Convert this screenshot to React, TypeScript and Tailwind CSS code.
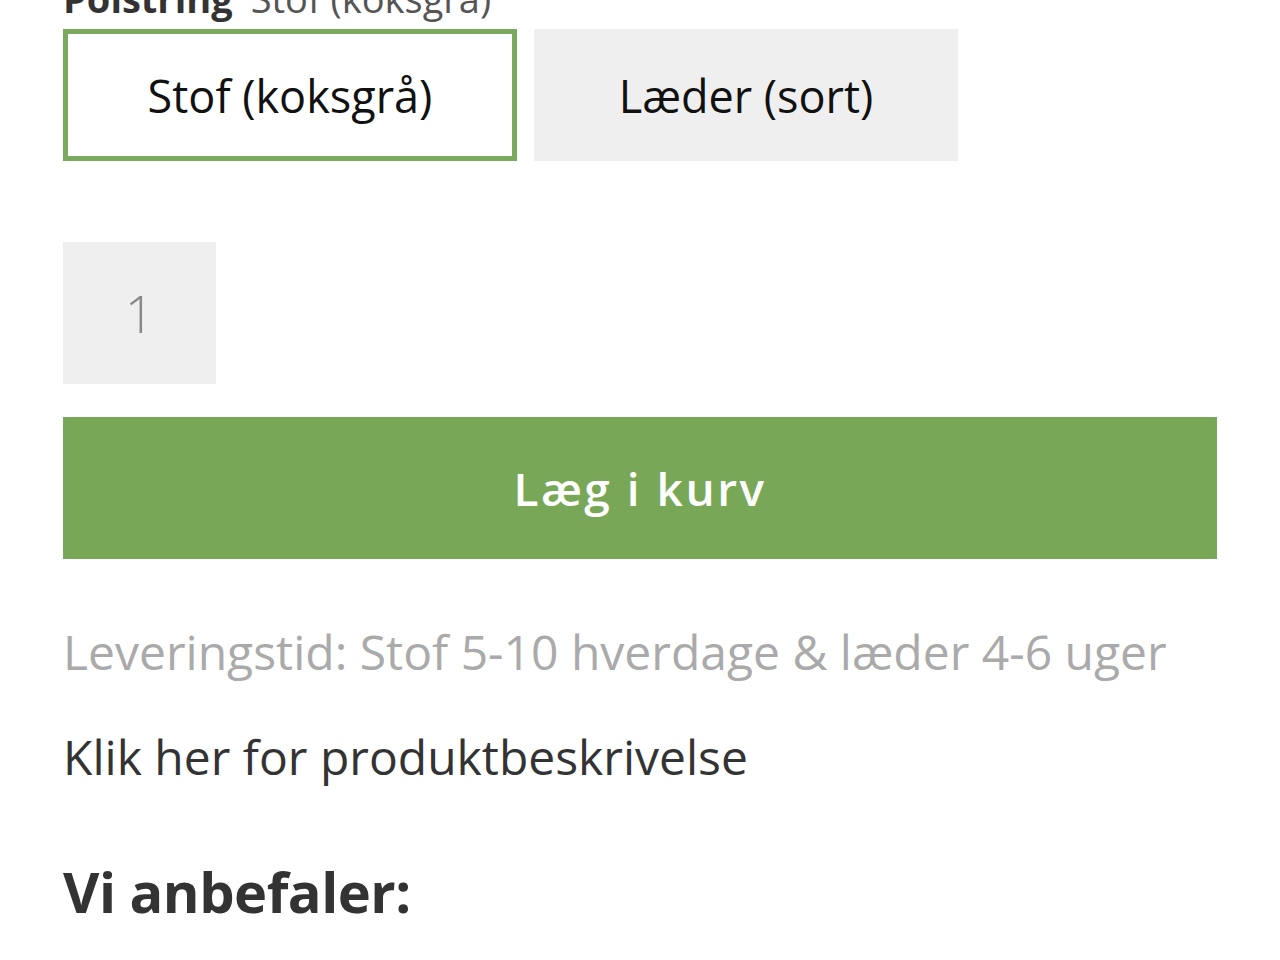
import React from "react";

export default function App() {
  return (
    <div className="min-h-[960px] bg-white overflow-hidden px-[63px] font-['Open_Sans',sans-serif]">
      <div className="-mt-[21px] h-[38px] text-[38px] leading-[38px] whitespace-nowrap">
        <span className="font-bold text-[#333333]">Polstring</span>
        <span className="ml-[18px] text-[#555555]">Stof (koksgrå)</span>
      </div>
      <div className="mt-[12px] flex gap-[17px]">
        <button className="flex h-[132px] w-[454px] items-center justify-center border-[5px] border-[#7aaa5d] bg-white text-[45px] leading-none text-[#111111]">
          Stof (koksgrå)
        </button>
        <button className="flex h-[132px] w-[424px] items-center justify-center bg-[#efefef] text-[45px] leading-none text-[#111111]">
          Læder (sort)
        </button>
      </div>
      <div className="mt-[81px] flex h-[142px] w-[153px] items-center justify-center bg-[#efefef] text-[52px] font-light leading-none text-[#888888]">
        1
      </div>
      <button className="mt-[33px] flex h-[142px] w-full items-center justify-center bg-[#78a857] text-[46px] font-semibold leading-none tracking-[2.5px] text-white">
        Læg i kurv
      </button>
      <p className="mt-[61px] text-[48px] leading-[64px] text-[#aaaaaa] whitespace-nowrap">
        Leveringstid: Stof 5-10 hverdage &amp; læder 4-6 uger
      </p>
      <p className="mt-[41px] text-[48px] leading-[64px] text-[#333333] whitespace-nowrap">
        Klik her for produktbeskrivelse
      </p>
      <h2 className="mt-[70px] text-[56px] font-bold leading-[64px] tracking-[-0.5px] text-[#333333]">
        Vi anbefaler:
      </h2>
    </div>
  );
}
